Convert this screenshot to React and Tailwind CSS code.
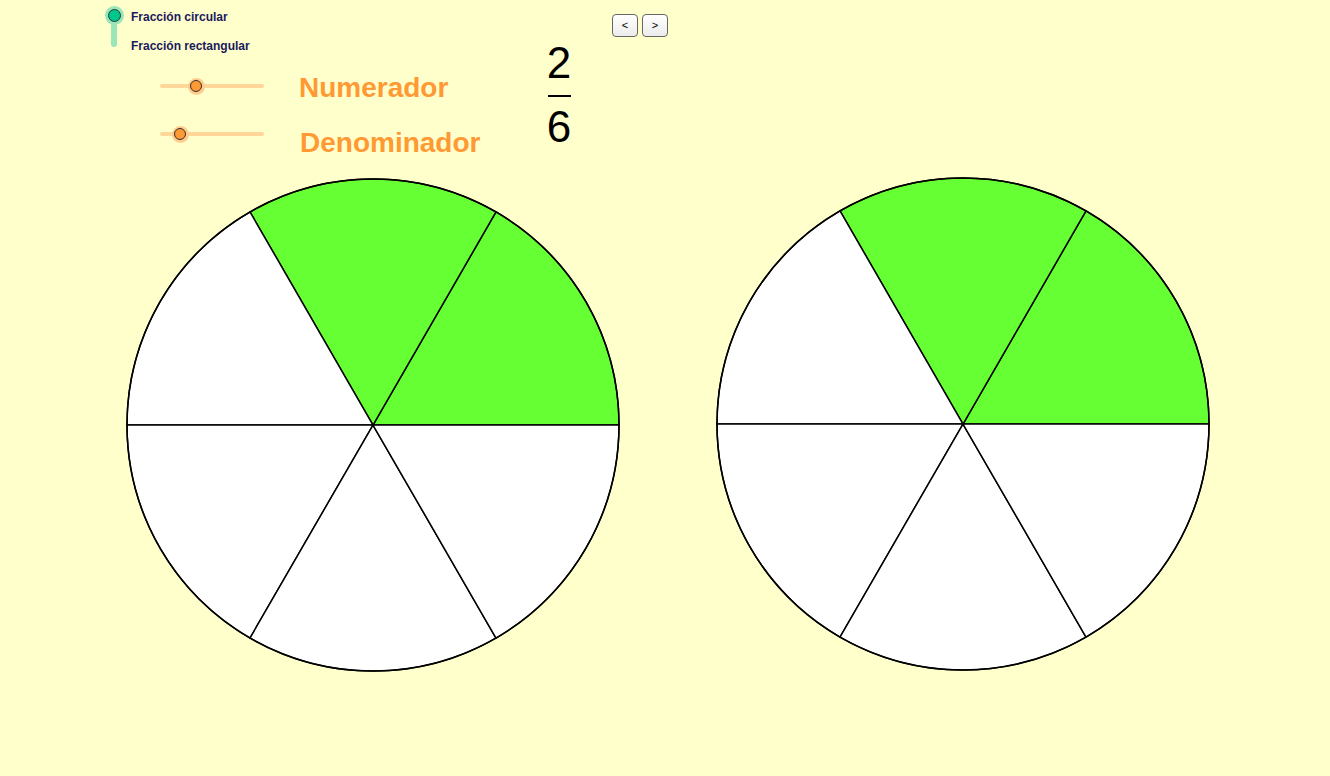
import React from 'react';

const FONT = { fontFamily: '"Liberation Sans", Arial, sans-serif' };

// Círculo dividido en partes iguales, con las primeras "num" pintadas
const Pie = ({ num, den }) => {
  const cx = 247;
  const cy = 247;
  const r = 246;
  const sectors = [];
  for (let k = 0; k < den; k++) {
    const a0 = (k * 2 * Math.PI) / den;
    const a1 = ((k + 1) * 2 * Math.PI) / den;
    const x0 = cx + r * Math.cos(a0);
    const y0 = cy - r * Math.sin(a0);
    const x1 = cx + r * Math.cos(a1);
    const y1 = cy - r * Math.sin(a1);
    sectors.push(
      <path
        key={k}
        d={`M ${cx} ${cy} L ${x0} ${y0} A ${r} ${r} 0 0 0 ${x1} ${y1} Z`}
        fill={k < num ? '#66ff33' : '#ffffff'}
        stroke="#000"
        strokeWidth="1.5"
        strokeLinejoin="round"
      />
    );
  }
  return (
    <svg width="494" height="494" viewBox="0 0 494 494">
      {sectors}
      <circle cx={cx} cy={cy} r={r} fill="none" stroke="#000" strokeWidth="1.5" />
    </svg>
  );
};

const Slider = ({ pos }) => (
  <div className="relative w-[104px] h-[16px] flex items-center">
    <div className="w-full h-[4px] rounded-full bg-[#ffd699]" />
    <div
      className="absolute w-[17px] h-[17px] rounded-full bg-[#ffcc8c] flex items-center justify-center"
      style={{ left: pos - 8.5 }}
    >
      <div className="w-[12px] h-[12px] rounded-full bg-[#ff9933] border border-[#333]" />
    </div>
  </div>
);

export default function App() {
  return (
    <div className="w-[1330px] h-[776px] bg-[#ffffcc] overflow-hidden flex flex-col" style={FONT}>
      {/* Cabecera: selector, deslizadores, fracción y botones */}
      <div className="h-[178px] flex pl-[105px]">
        <div className="w-[441px] flex flex-col">
          <div className="flex pt-[6px]">
            <div className="relative w-[19px] h-[44px]">
              <div className="absolute left-[6px] top-[9px] w-[6px] h-[32px] rounded-full bg-[#99e6b8]" />
              <div className="absolute left-0 -top-[0.5px] w-[19px] h-[19px] rounded-full bg-[#99e6b8] flex items-center justify-center">
                <div className="w-[13px] h-[13px] rounded-full bg-[#00c78c] border border-[#333]" />
              </div>
            </div>
            <div className="ml-[7px] flex flex-col text-[12px] font-bold text-[#1a1a5c] leading-[13px]">
              <span className="mt-[5px]">Fracción circular</span>
              <span className="mt-[16px]">Fracción rectangular</span>
            </div>
          </div>
          <div className="flex mt-[8px]">
            <div className="ml-[55px] flex flex-col">
              <div className="mt-[17px]"><Slider pos={36} /></div>
              <div className="mt-[32px]"><Slider pos={20} /></div>
            </div>
            <div className="ml-[35px] flex flex-col text-[28px] font-bold text-[#ff9933] leading-[32px]">
              <span className="mt-[11px]">Numerador</span>
              <span className="mt-[23px] ml-[1px]">Denominador</span>
            </div>
          </div>
        </div>
        <div className="flex flex-col items-center w-[26px] mt-[41px] text-[44px] leading-[44px] text-black">
          <span>2</span>
          <div className="w-[23px] h-[2px] bg-black mt-[10px] mb-[8px]" />
          <span>6</span>
        </div>
        <div className="flex gap-[4px] ml-[40px] mt-[14px]">
          <button className="w-[26px] h-[23px] rounded-[4px] border border-[#666] bg-gradient-to-b from-white to-[#ececec] text-[11px] text-black leading-none">&lt;</button>
          <button className="w-[26px] h-[23px] rounded-[4px] border border-[#666] bg-gradient-to-b from-white to-[#ececec] text-[11px] text-black leading-none">&gt;</button>
        </div>
      </div>

      {/* Círculos */}
      <div className="flex pl-[126px] gap-[96px]">
        <Pie num={2} den={6} />
        <div className="-mt-[1px]">
          <Pie num={2} den={6} />
        </div>
      </div>
    </div>
  );
}
